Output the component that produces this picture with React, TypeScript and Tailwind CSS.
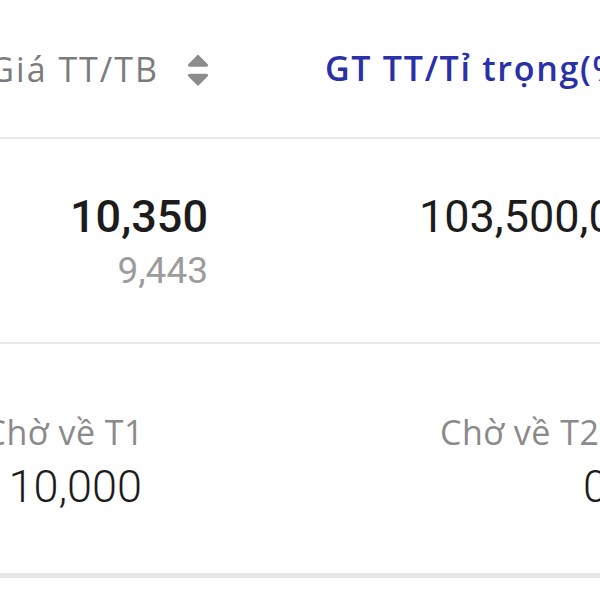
import React from "react";

function SortIcon() {
  return (
    <svg width="22" height="32" viewBox="0 0 22 32" className="shrink-0 text-[#8c8c8c]">
      <path d="M11 1.5 L20 10.5 Q21 12 19 12 L3 12 Q1 12 2 10.5 Z" fill="currentColor" strokeLinejoin="round" stroke="currentColor" strokeWidth="1.5" />
      <path d="M11 31 L20 22 Q21 20.5 19 20.5 L3 20.5 Q1 20.5 2 22 Z" fill="currentColor" strokeLinejoin="round" stroke="currentColor" strokeWidth="1.5" />
    </svg>
  );
}

export default function App() {
  const label = "font-['Open_Sans','Noto_Sans',sans-serif]";
  const num = "font-['Roboto','Noto_Sans',sans-serif]";
  return (
    <div className="w-[600px] h-[600px] overflow-hidden bg-white">
      {/* header row */}
      <div className="h-[137px] flex items-center whitespace-nowrap">
        <div className="w-[209px] shrink-0 flex items-center justify-end gap-[28px] pt-[2px]">
          <span className={`${label} shrink-0 text-[34px] tracking-[2px] text-[#7b7b7b]`}>Giá TT/TB</span>
          <SortIcon />
        </div>
        <div className={`${label} ml-[116px] text-[34px] tracking-[1.7px] font-semibold text-[#2a30a8] shrink-0`}>
          GT TT/Tỉ trọng(%)
        </div>
      </div>
      <div className="h-[2px] bg-[#e8e8e8]" />

      {/* price row */}
      <div className="h-[203px] flex whitespace-nowrap">
        <div className="w-[208px] shrink-0 flex flex-col items-end pt-[50px]">
          <span className={`${num} text-[45px] leading-[56px] font-medium text-[#1c1c1c]`}>10,350</span>
          <span className={`${num} text-[37px] leading-[44px] mt-[4px] text-[#9c9c9c]`}>9,443</span>
        </div>
        <div className={`${num} ml-[211px] pt-[50px] text-[45px] leading-[56px] text-[#1c1c1c] shrink-0`}>
          103,500,000
        </div>
      </div>
      <div className="h-[2px] bg-[#e8e8e8]" />

      {/* pending row */}
      <div className="h-[229px] flex whitespace-nowrap">
        <div className="w-[144px] shrink-0 flex flex-col items-end pt-[66px]">
          <span className={`${label} text-[34px] leading-[44px] tracking-[0.5px] text-[#8a8a8a]`}>Chờ về T1</span>
          <span className={`${num} text-[45px] leading-[58px] mt-[4px] font-light text-[#1c1c1c] pr-[2px]`}>10,000</span>
        </div>
        <div className="ml-[296px] shrink-0 flex flex-col items-start pt-[66px]">
          <span className={`${label} text-[34px] leading-[44px] tracking-[0.5px] text-[#8a8a8a]`}>Chờ về T2</span>
          <span className={`${num} text-[45px] leading-[58px] mt-[4px] font-light text-[#1c1c1c] ml-[143px]`}>0</span>
        </div>
      </div>
      <div className="h-[5px] bg-[#e6e6e6]" />
    </div>
  );
}
